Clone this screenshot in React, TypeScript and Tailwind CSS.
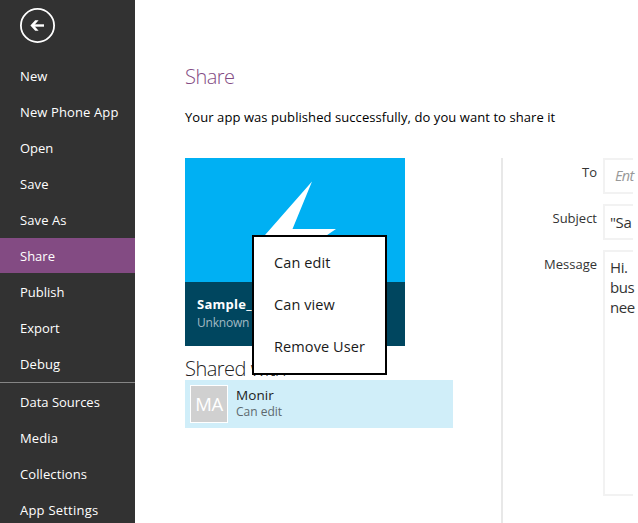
import React from "react";

type NavItem = { label: string; tracking: string; active?: boolean };

const fileItems: NavItem[] = [
  { label: "New", tracking: "tracking-[0.1px]" },
  { label: "New Phone App", tracking: "tracking-[0.12px]" },
  { label: "Open", tracking: "tracking-[0px]" },
  { label: "Save", tracking: "tracking-[0.1px]" },
  { label: "Save As", tracking: "tracking-[0.1px]" },
  { label: "Share", tracking: "tracking-[0px]", active: true },
  { label: "Publish", tracking: "tracking-[0px]" },
  { label: "Export", tracking: "tracking-[0px]" },
  { label: "Debug", tracking: "tracking-[0.1px]" },
];

const contentItems: NavItem[] = [
  { label: "Data Sources", tracking: "tracking-[0px]" },
  { label: "Media", tracking: "tracking-[0.1px]" },
  { label: "Collections", tracking: "tracking-[0.1px]" },
  { label: "App Settings", tracking: "tracking-[0.22px]" },
];

function NavRow({ item }: { item: NavItem }) {
  return (
    <li className="h-9 shrink-0">
      <div className={`flex h-[35px] items-center pl-5 ${item.active ? "bg-[#834b83]" : ""}`}>
        <span className={`whitespace-nowrap ${item.tracking}`}>{item.label}</span>
      </div>
    </li>
  );
}

function Sidebar() {
  return (
    <nav className="flex h-full w-[135px] shrink-0 flex-col overflow-hidden bg-[#323232] text-[13px] leading-[18px] text-white">
      <div className="h-[58px] shrink-0 pt-2 pl-5">
        <svg width="35" height="35" viewBox="0 0 35 35" fill="none" stroke="white">
          <circle cx="17.5" cy="17.5" r="16.6" strokeWidth="1.8" />
          <path d="M24 17.5H12.5" strokeWidth="2.4" />
          <path d="M15.2 12.3H18.6L14 17.5L18.6 22.7H15.2L10.4 17.5Z" fill="white" stroke="none" />
        </svg>
      </div>
      <ul className="shrink-0">
        {fileItems.map((item) => (
          <NavRow key={item.label} item={item} />
        ))}
      </ul>
      <div className="mb-px h-px shrink-0 bg-[#858585]" />
      <ul className="shrink-0">
        {contentItems.map((item) => (
          <NavRow key={item.label} item={item} />
        ))}
      </ul>
    </nav>
  );
}

function AccessMenu() {
  return (
    <div className="absolute top-[77px] left-[67px] flex h-[140px] w-[135px] flex-col border-2 border-black bg-white pt-[5px] pl-5 text-[14.5px] tracking-[0.1px] text-[#1a1a1a]">
      <div className="flex h-[42px] items-center whitespace-nowrap">Can edit</div>
      <div className="flex h-[42px] items-center whitespace-nowrap">Can view</div>
      <div className="flex h-[42px] items-center whitespace-nowrap">Remove User</div>
    </div>
  );
}

function SharedApp() {
  return (
    <section className="relative w-[268px] shrink-0">
      <div className="flex h-[188px] w-[220px] flex-col bg-[#00b0f3]">
        <svg className="h-[124px] w-[220px] shrink-0" viewBox="0 0 220 124" fill="white">
          <path d="M127 23.5L73 85L94 85L80 119L151 71H107.5Z" />
        </svg>
        <div className="h-16 bg-[#00465f] pt-[13px] pl-3">
          <div className="text-[13px] leading-[18px] font-bold tracking-[0.25px] text-white">Sample_</div>
          <div className="pt-px text-[12px] leading-[18px] tracking-[-0.2px] text-[#a0bac4]">Unknown</div>
        </div>
      </div>
      <h2 className="h-[34px] pt-[10px] text-[20px] leading-[26px] font-light tracking-[-0.5px] whitespace-nowrap text-[#222]">Shared with</h2>
      <div className="flex h-12 items-start bg-[#d0eef9] p-[5px]">
        <div className="flex size-[38px] items-center justify-center border border-white bg-[#d0d0d0] text-[18.5px] tracking-[-0.5px] text-white">MA</div>
        <div className="pt-[2px] pl-2">
          <div className="text-[13.5px] leading-[17px] tracking-[0.1px] text-[#1c1c1c]">Monir</div>
          <div className="text-[12px] leading-[15px] text-[#5d696e]">Can edit</div>
        </div>
      </div>
      <AccessMenu />
    </section>
  );
}

function Field({ label, height, children }: { label: string; height: string; children: React.ReactNode }) {
  return (
    <div className={`flex ${height}`}>
      <label className="w-[94px] shrink-0 pt-[5px] text-right text-[13px] leading-[18px] text-[#333]">{label}</label>
      <div className="ml-[6px] w-[30px] shrink-0 border-2 border-r-0 border-[#f2f2f2] pl-[5px] text-[15px] leading-5 tracking-[-0.4px] whitespace-nowrap text-[#333]">
        {children}
      </div>
    </div>
  );
}

function MailForm() {
  return (
    <section className="ml-[48px] flex h-[365px] w-[132px] shrink-0 flex-col gap-[10px] border-l-2 border-[#e8e8e8]">
      <Field label="To" height="h-9">
        <div className="pt-[6px] pl-[5px] text-[14.5px] tracking-[-0.7px] text-[#999] italic">Ent</div>
      </Field>
      <Field label="Subject" height="h-9">
        <div className="pt-[6px]">"Sa</div>
      </Field>
      <Field label="Message" height="h-[246px]">
        <div className="pt-[5px]">Hi.</div>
        <div>bus</div>
        <div>nee</div>
      </Field>
    </section>
  );
}

export default function App() {
  return (
    <div className="flex h-[523px] w-[638px] overflow-hidden bg-white font-['Open_Sans','Noto_Sans',sans-serif]">
      <Sidebar />
      <main className="w-[503px] shrink-0 pl-[50px]">
        <h1 className="h-[108px] pt-[64px] text-[20px] leading-[26px] font-light tracking-[-0.5px] text-[#834b83]">Share</h1>
        <p className="h-[50px] text-[13px] leading-[18px] tracking-[0.07px] whitespace-nowrap text-black">
          Your app was published successfully, do you want to share it
        </p>
        <div className="flex">
          <SharedApp />
          <MailForm />
        </div>
      </main>
    </div>
  );
}
